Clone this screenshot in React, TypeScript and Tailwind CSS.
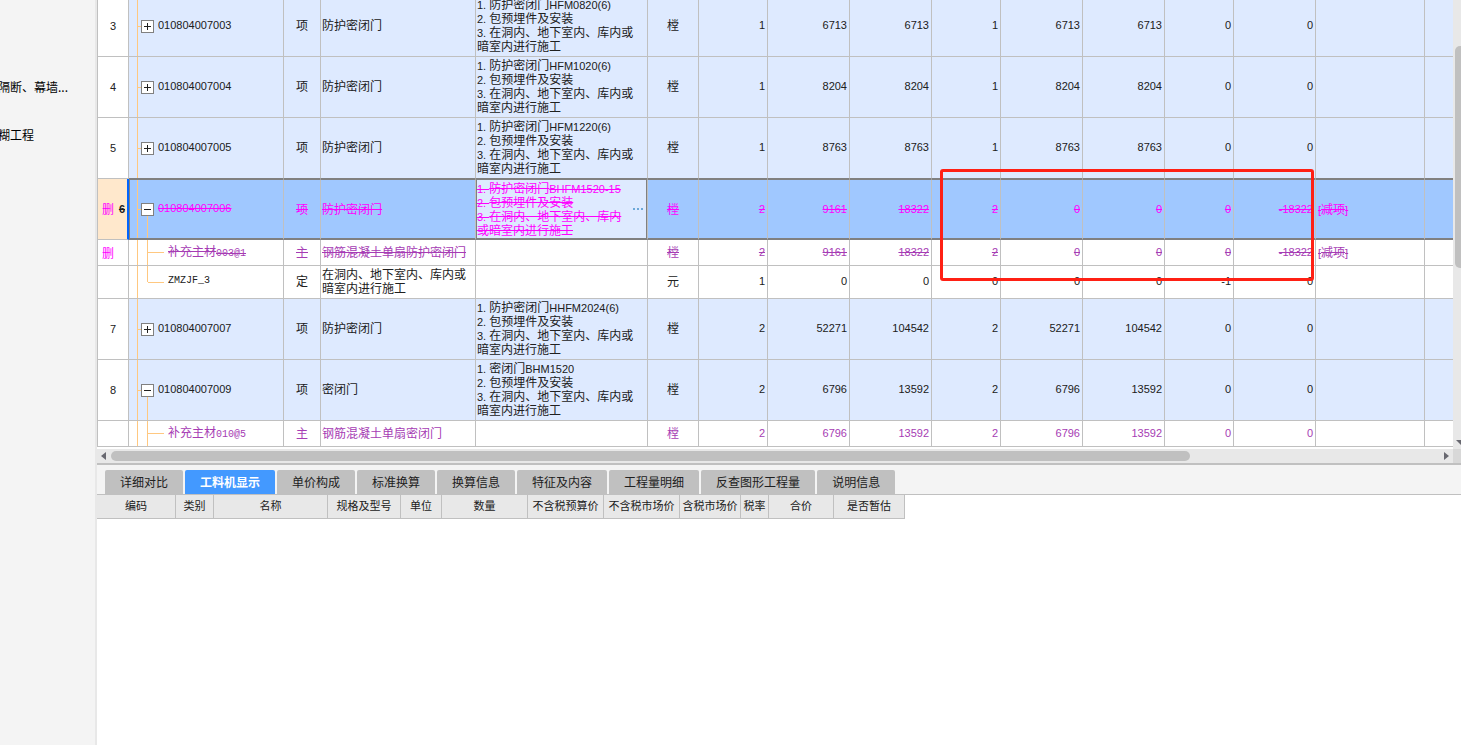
import React from 'react';
import clsx from 'clsx';

type Row = {
  index?: string;
  deleted?: boolean;
  selected?: boolean;
  kind: 'item' | 'material' | 'quota';
  expanded?: boolean;
  last?: boolean;
  code: string;
  type: string;
  name: string[];
  features: string[];
  unit: string;
  values: string[];
  remark?: string;
};

const construction = ['3. 在洞内、地下室内、库内或', '暗室内进行施工'];

const rows: Row[] = [
  {
    index: '3', kind: 'item', code: '010804007003', type: '项', name: ['防护密闭门'],
    features: ['1. 防护密闭门HFM0820(6)', '2. 包预埋件及安装', ...construction],
    unit: '樘', values: ['1', '6713', '6713', '1', '6713', '6713', '0', '0'],
  },
  {
    index: '4', kind: 'item', code: '010804007004', type: '项', name: ['防护密闭门'],
    features: ['1. 防护密闭门HFM1020(6)', '2. 包预埋件及安装', ...construction],
    unit: '樘', values: ['1', '8204', '8204', '1', '8204', '8204', '0', '0'],
  },
  {
    index: '5', kind: 'item', code: '010804007005', type: '项', name: ['防护密闭门'],
    features: ['1. 防护密闭门HFM1220(6)', '2. 包预埋件及安装', ...construction],
    unit: '樘', values: ['1', '8763', '8763', '1', '8763', '8763', '0', '0'],
  },
  {
    index: '6', kind: 'item', deleted: true, selected: true, expanded: true,
    code: '010804007006', type: '项', name: ['防护密闭门'],
    features: ['1. 防护密闭门BHFM1520-15', '2. 包预埋件及安装', '3. 在洞内、地下室内、库内', '或暗室内进行施工'],
    unit: '樘', values: ['2', '9161', '18322', '2', '0', '0', '0', '-18322'], remark: '[减项]',
  },
  {
    kind: 'material', deleted: true, code: '补充主材003@1', type: '主', name: ['钢筋混凝土单扇防护密闭门'],
    features: [], unit: '樘', values: ['2', '9161', '18322', '2', '0', '0', '0', '-18322'], remark: '[减项]',
  },
  {
    kind: 'quota', last: true, code: 'ZMZJF_3', type: '定', name: ['在洞内、地下室内、库内或', '暗室内进行施工'],
    features: [], unit: '元', values: ['1', '0', '0', '0', '0', '0', '-1', '0'],
  },
  {
    index: '7', kind: 'item', code: '010804007007', type: '项', name: ['防护密闭门'],
    features: ['1. 防护密闭门HHFM2024(6)', '2. 包预埋件及安装', ...construction],
    unit: '樘', values: ['2', '52271', '104542', '2', '52271', '104542', '0', '0'],
  },
  {
    index: '8', kind: 'item', expanded: true, code: '010804007009', type: '项', name: ['密闭门'],
    features: ['1. 密闭门BHM1520', '2. 包预埋件及安装', ...construction],
    unit: '樘', values: ['2', '6796', '13592', '2', '6796', '13592', '0', '0'],
  },
  {
    kind: 'material', code: '补充主材010@5', type: '主', name: ['钢筋混凝土单扇密闭门'],
    features: [], unit: '樘', values: ['2', '6796', '13592', '2', '6796', '13592', '0', '0'],
  },
];

const columns = [
  'w-[32px]', 'w-[155px]', 'w-[37px]', 'w-[155px]', 'w-[172px]', 'w-[51px]', 'w-[69px]', 'w-[82px]',
  'w-[82px]', 'w-[69px]', 'w-[82px]', 'w-[82px]', 'w-[69px]', 'w-[82px]', 'w-[109px]', 'w-auto',
];

const tabs = ['详细对比', '工料机显示', '单价构成', '标准换算', '换算信息', '特征及内容', '工程量明细', '反查图形工程量', '说明信息'];

const detailColumns = [
  { label: '编码', width: 'w-[79px]' },
  { label: '类别', width: 'w-[38px]' },
  { label: '名称', width: 'w-[114px]' },
  { label: '规格及型号', width: 'w-[73px]' },
  { label: '单位', width: 'w-[41px]' },
  { label: '数量', width: 'w-[86px]' },
  { label: '不含税预算价', width: 'w-[76px]' },
  { label: '不含税市场价', width: 'w-[76px]' },
  { label: '含税市场价', width: 'w-[61px]' },
  { label: '税率', width: 'w-[28px]' },
  { label: '合价', width: 'w-[65px]' },
  { label: '是否暂估', width: 'w-[71px]' },
];

// Latin runs are set smaller so that a digit is half as wide as a Chinese character.
// Each run carries its own strike, otherwise the line sits too low on the small ones.
const Mixed = ({ text, mono, strike }: { text: string; mono?: boolean; strike?: boolean }) => {
  const latin = mono
    ? "text-[10px] font-['Liberation_Mono',monospace]"
    : "text-[11px] font-['Liberation_Sans',sans-serif]";
  const line = strike && 'line-through';

  if (/^[\x20-\x7e]+$/.test(text)) {
    return <span className={clsx('block', latin, line)}>{text}</span>;
  }
  return (
    <>
      {text.split(/([\x20-\x7e]+)/).filter(Boolean).map((part, i) => (
        <span key={i} className={clsx(/^[\x20-\x7e]/.test(part) && ['leading-none', latin], line)}>
          {part}
        </span>
      ))}
    </>
  );
};

const ToggleButton = ({ expanded, code }: { expanded?: boolean; code: string }) => (
  <button
    type="button"
    aria-expanded={!!expanded}
    aria-label={code}
    className="flex size-[13px] shrink-0 items-center justify-center border border-[#808080] bg-white"
  >
    <svg width="11" height="11" viewBox="0 0 11 11" shapeRendering="crispEdges" fill="#202020">
      <rect x="2" y="5" width="7" height="1" />
      {!expanded && <rect x="5" y="2" width="1" height="7" />}
    </svg>
  </button>
);

const CodeCell = ({ row }: { row: Row }) => {
  if (row.kind === 'item') {
    return (
      <div className="flex h-full items-center">
        <span className="ml-2 w-px self-stretch bg-[#ffc880]" />
        <span className="h-px w-[3px] bg-[#ffc880]" />
        <span className="flex flex-col items-center self-stretch">
          <span className="flex-1" />
          <ToggleButton expanded={row.expanded} code={row.code} />
          <span className={clsx('w-px flex-1', row.expanded && 'bg-[#ffc880]')} />
        </span>
        <span className="ml-1 pb-[2px]">
          <Mixed text={row.code} strike={row.deleted} />
        </span>
      </div>
    );
  }
  return (
    <div className="flex h-full items-center">
      <span className="ml-2 w-px self-stretch bg-[#ffc880]" />
      <span className="ml-[9px] flex w-px flex-col self-stretch">
        <span className="flex-1 bg-[#ffc880]" />
        <span className={clsx('flex-1', !row.last && 'bg-[#ffc880]')} />
      </span>
      <span className="h-px w-4 bg-[#ffc880]" />
      <span className="ml-1 pb-[2px]">
        <Mixed text={row.code} mono strike={row.deleted} />
      </span>
    </div>
  );
};

const GridRow = ({ row, beforeSelected }: { row: Row; beforeSelected: boolean }) => {
  const { selected, deleted } = row;
  const height = { item: 'h-[61px]', material: 'h-[26px]', quota: 'h-[33px]' }[row.kind];
  const frame = clsx(
    'border-r border-r-[#c0c0c0]',
    selected ? 'border-t border-b-2 border-y-[#808080]' : 'border-b',
    !selected && (beforeSelected ? 'border-b-[#808080]' : 'border-b-[#c0c0c0]')
  );
  const cell = clsx(frame, selected ? 'pb-px' : 'pb-[2px]');

  return (
    <tr
      className={clsx(
        height,
        selected ? 'bg-[#a0c8ff]' : row.kind === 'item' ? 'bg-[#deeaff]' : 'bg-white',
        selected ? 'text-[#ff00ff]' : row.kind === 'material' ? 'text-[#a63cb4]' : 'text-[#202020]'
      )}
    >
      <th
        scope="row"
        className={clsx(
          'border-b border-l border-[#c0c0c0] p-0 text-center font-normal',
          selected ? 'border-r-2 border-r-[#0064ff] bg-[#ffe8cc]' : 'border-r bg-white'
        )}
      >
        <div className={clsx('flex items-center', deleted ? 'justify-between pl-1' : 'justify-center')}>
          {deleted && <span className="text-[#ff00ff]">删</span>}
          {row.index && (
            <span className={clsx('text-[#202020]', selected && 'pr-[2px] font-bold')}>
              <Mixed text={row.index} strike={deleted} />
            </span>
          )}
        </div>
      </th>
      <td className={clsx(frame, 'h-[inherit] p-0', selected && 'shadow-[inset_1px_0_#808080]')}>
        <CodeCell row={row} />
      </td>
      <td className={clsx(cell, 'text-center')}>
        <Mixed text={row.type} strike={deleted} />
      </td>
      <td className={clsx(cell, 'pl-px')}>
        {row.name.map(line => (
          <div key={line}>
            <Mixed text={line} strike={deleted} />
          </div>
        ))}
      </td>
      <td className={clsx(cell, 'pl-px', selected && 'bg-[#deeaff] shadow-[inset_1px_0_#808080,inset_-1px_0_#808080]')}>
        <div className="flex items-center justify-between">
          <div>
            {row.features.map(line => (
              <div key={line}>
                <Mixed text={line} strike={deleted} />
              </div>
            ))}
          </div>
          {selected && (
            <button type="button" aria-label="编辑项目特征" className="flex gap-[2px] pr-1">
              <span className="size-[2px] bg-[#6ca8d8]" />
              <span className="size-[2px] bg-[#6ca8d8]" />
              <span className="size-[2px] bg-[#6ca8d8]" />
            </button>
          )}
        </div>
      </td>
      <td className={clsx(cell, 'text-center')}>
        <Mixed text={row.unit} strike={deleted} />
      </td>
      {row.values.map((value, i) => (
        <td key={i} className={clsx(cell, 'pr-[2px] text-right')}>
          <Mixed text={value} strike={deleted} />
        </td>
      ))}
      <td className={clsx(cell, 'pl-[2px]')}>{row.remark && <Mixed text={row.remark} strike={deleted} />}</td>
      <td className={clsx(cell, 'border-r-0')} />
    </tr>
  );
};

const BillGrid = () => (
  <div className="relative flex h-[449px] overflow-hidden bg-white">
    <div className="min-w-0 flex-1">
      <table className="-mt-1 w-full table-fixed border-separate border-spacing-0">
        <colgroup>
          {columns.map((width, i) => (
            <col key={i} className={width} />
          ))}
        </colgroup>
        <tbody>
          {rows.map((row, i) => (
            <GridRow key={row.code} row={row} beforeSelected={!!rows[i + 1]?.selected} />
          ))}
        </tbody>
      </table>
    </div>
    <div className="flex w-2 shrink-0 flex-col items-start overflow-hidden bg-[#e8e8e8] pl-[2px]">
      <div className="mt-[46px] h-[222px] w-[10px] rounded-[5px] bg-[#c0c0c0]" />
      <svg className="mt-auto mb-1 shrink-0" width="12" height="5" viewBox="0 0 12 5">
        <path d="M1 0h10L6 5z" fill="#686870" />
      </svg>
    </div>
    <div className="absolute top-[169px] left-[843px] h-[112px] w-[374px] rounded-[3px] border-3 border-[#ff2014]" />
  </div>
);

const HorizontalScroll = () => (
  <div className="flex h-[14px] bg-[#e8e8e8]">
    <div className="flex flex-1 items-center">
      <svg className="ml-1" width="5" height="8" viewBox="0 0 5 8">
        <path d="M5 0v8L0 4z" fill="#686870" />
      </svg>
      <div className="ml-[5px] h-[10px] w-[80%] max-w-[1079px] rounded-full bg-[#c0c0c0]" />
      <svg className="mr-1 ml-auto" width="5" height="8" viewBox="0 0 5 8">
        <path d="M0 0v8l5-4z" fill="#686870" />
      </svg>
    </div>
    <div className="w-2 bg-[#d8d8d8]" />
  </div>
);

const DetailPanel = () => (
  <section className="flex-1 bg-white">
    <div role="tablist" className="flex gap-[2px] border-t-2 border-b border-[#c0c0c0] bg-[#f4f4f4] pt-[5px] pl-2">
      {tabs.map(tab => {
        const active = tab === '工料机显示';
        return (
          <button
            key={tab}
            type="button"
            role="tab"
            aria-selected={active}
            className={clsx(
              'h-6 shrink-0 rounded-t-[2px] px-[15px]',
              active ? 'bg-[#4399ff] font-bold text-white' : 'bg-[#c0c0c0] text-[#202020]'
            )}
          >
            {tab}
          </button>
        );
      })}
    </div>
    <table className="w-[808px] table-fixed border-separate border-spacing-0 text-[11px] text-[#202020]">
      <thead>
        <tr className="h-6 bg-[#e8e8e8]">
          {detailColumns.map(column => (
            <th
              key={column.label}
              scope="col"
              className={clsx(
                'border-r border-b border-[#c0c0c0] pb-[3px] text-center font-normal whitespace-nowrap',
                column.width
              )}
            >
              {column.label}
            </th>
          ))}
        </tr>
      </thead>
    </table>
  </section>
);

const Sidebar = () => (
  <nav className="w-[97px] shrink-0 overflow-hidden border-r-2 border-[#e8e8e8] bg-[#f4f4f4] pt-[75px] text-black">
    <ul className="-ml-[2px] space-y-6 whitespace-nowrap">
      <li className="h-6 leading-6">隔断、幕墙...</li>
      <li className="h-6 leading-6">糊工程</li>
    </ul>
  </nav>
);

const App = () => (
  <div className="flex min-h-screen bg-white font-['Noto_Sans_CJK_SC',sans-serif] text-[12px] leading-[14px]">
    <Sidebar />
    <main className="flex min-w-0 flex-1 flex-col">
      <BillGrid />
      <HorizontalScroll />
      <DetailPanel />
    </main>
  </div>
);

export default App;
